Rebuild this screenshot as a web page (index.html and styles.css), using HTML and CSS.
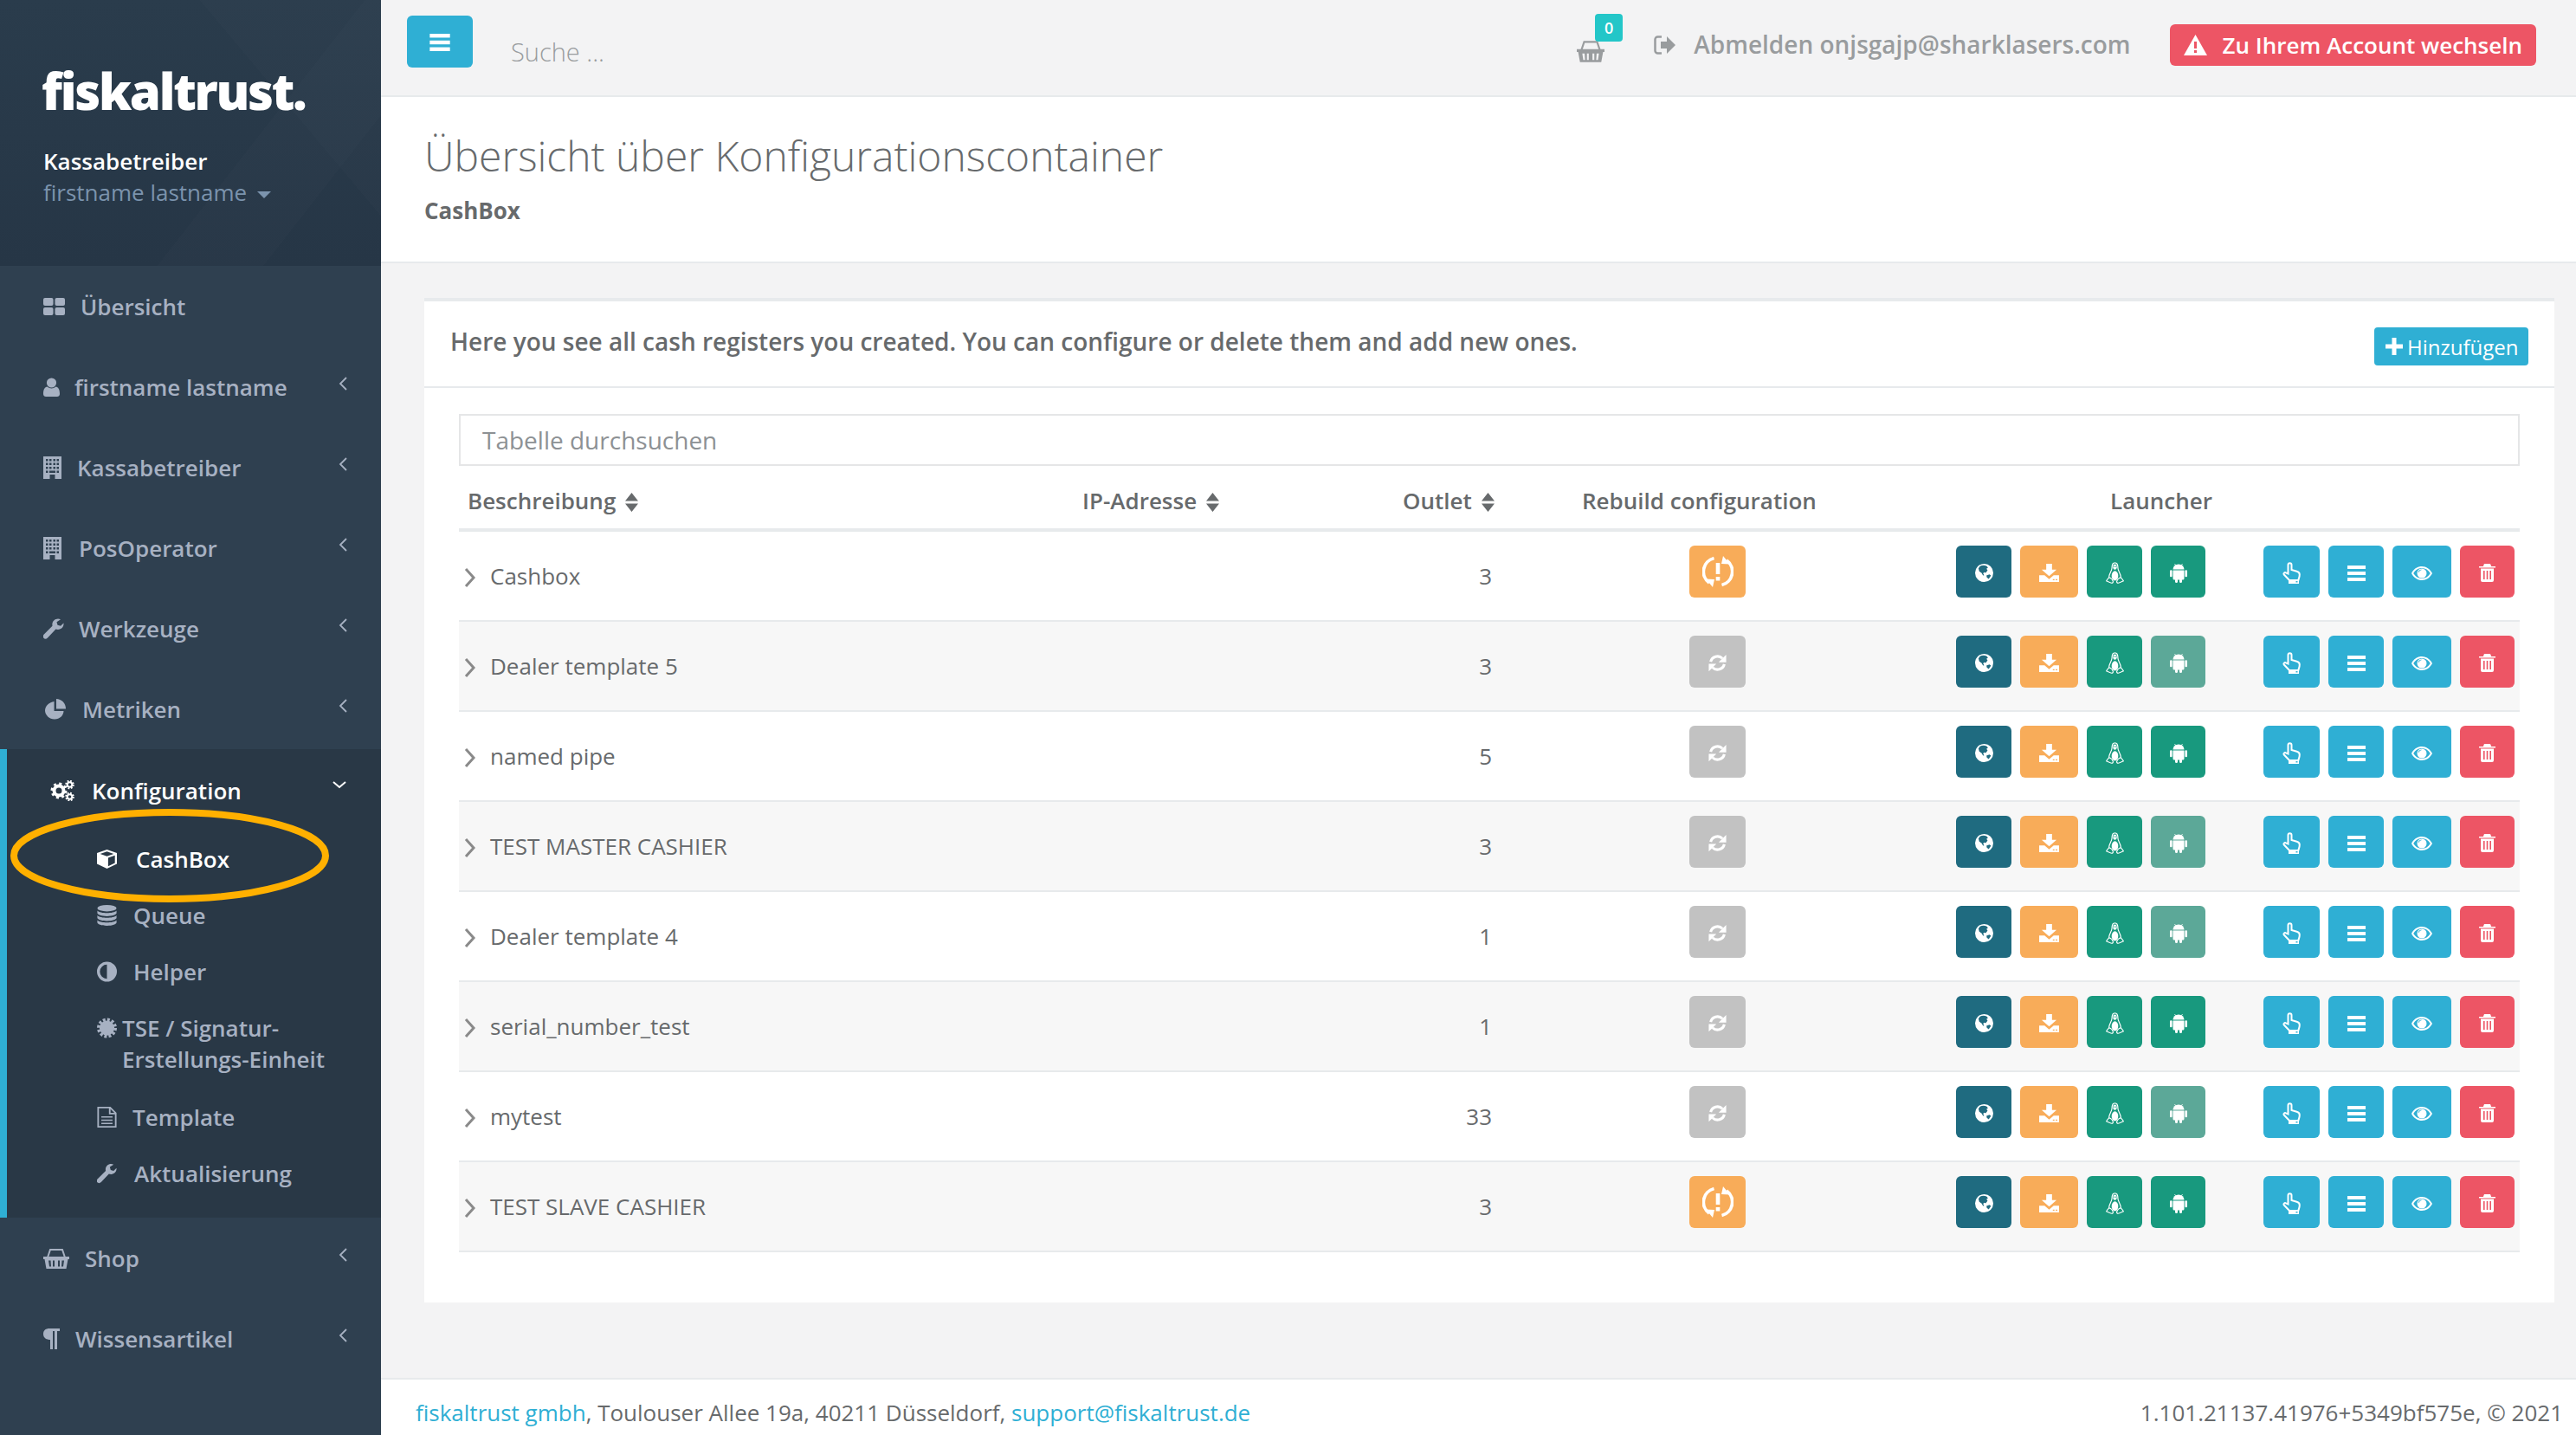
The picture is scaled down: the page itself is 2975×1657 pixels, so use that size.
FILE: index.html
```html
<!DOCTYPE html>
<html lang="de">

<head>
    <meta charset="UTF-8">
    <meta name="viewport" content="width=device-width, initial-scale=1.0">
    <title>Übersicht über Konfigurationscontainer</title>
    <link rel="stylesheet" href="styles.css">
</head>

<body>
    <svg class="sprite" xmlns="http://www.w3.org/2000/svg">
        <symbol id="i-dash" viewBox="0 0 25 20"><rect width="11.5" height="9" rx="2"/><rect x="13.5" width="11.5" height="9" rx="2"/><rect y="11" width="11.5" height="9" rx="2"/><rect x="13.5" y="11" width="11.5" height="9" rx="2"/></symbol>
        <symbol id="i-user" viewBox="0 0 19 22"><circle cx="9.5" cy="6" r="5.6"/><path d="M0 19c0-6 2-8 4.500-8.500 3 2.500 7 2.500 10 0C17 11 19 13 19 19c0 2-1.500 3-3 3H3c-1.500 0-3-1-3-3z"/></symbol>
        <symbol id="i-building" viewBox="0 0 21 26"><path fill-rule="evenodd" d="M0 0h21v26H0z M3 3v2.500h2.500V3z M7 3v2.500h2.500V3z M11.500 3v2.500H14V3z M15.500 3v2.500H18V3z M3 7.500V10h2.500V7.500z M7 7.500V10h2.500V7.500z M11.500 7.500V10H14V7.500z M15.500 7.500V10H18V7.500z M3 12v2.500h2.500V12z M7 12v2.500h2.500V12z M11.500 12v2.500H14V12z M15.500 12v2.500H18V12z M3 16.500V19h2.500v-2.500z M15.500 16.500V19H18v-2.500z M7 16.500V19h7v-2.500z M7.500 21v5h6v-5z"/></symbol>
        <symbol id="i-wrench" viewBox="0 0 24 24"><path d="M23.500 5.500c.5 4-2.500 7.500-6.500 7.500-1 0-1.800-.2-2.600-.5L5 22.500c-1.500 1.500-3.500 1.500-4.500.3-1-1-1-2.800.3-4.200l9.700-9.800C9.600 4 13 .5 17 .5c1 0 2 .2 3 .8l-4.500 3 1 3.500 3.500 1z"/></symbol>
        <symbol id="i-pie" viewBox="0 0 24 24"><path d="M10.500 3v11h11c0 5-4.500 9.500-10.500 9.500S0 18.500 0 13.500 5 3.500 10.500 3z"/><path d="M13 0c6 0 11 5 11 11.500H13z"/></symbol>
        <symbol id="i-cogs" viewBox="0 0 28 24"><g fill="none" stroke="currentColor"><circle cx="10" cy="12" r="5.500" stroke-width="4"/><circle cx="10" cy="12" r="8" stroke-width="3" stroke-dasharray="3 3.280"/><circle cx="22.500" cy="5" r="2.800" stroke-width="2"/><circle cx="22.500" cy="5" r="4.300" stroke-width="2" stroke-dasharray="1.800 1.580"/><circle cx="22.500" cy="19" r="2.800" stroke-width="2"/><circle cx="22.500" cy="19" r="4.300" stroke-width="2" stroke-dasharray="1.800 1.580"/></g></symbol>
        <symbol id="i-cube" viewBox="0 0 25 24"><path fill-rule="evenodd" d="M12.500 0L25 4.500V18L12.500 24 0 18V4.500z M12.500 2.500L4 5.500l8.500 3 8.500-3z M14 10.500v10.500l8.500-4V7.500z"/></symbol>
        <symbol id="i-db" viewBox="0 0 24 26"><ellipse cx="12" cy="4" rx="12" ry="4"/><path d="M0 7c2 2 7 3 12 3s10-1 12-3v3c0 2-5 4-12 4S0 12 0 10z"/><path d="M0 13c2 2 7 3 12 3s10-1 12-3v3c0 2-5 4-12 4S0 18 0 16z"/><path d="M0 19c2 2 7 3 12 3s10-1 12-3v3c0 2-5 4-12 4S0 24 0 22z"/></symbol>
        <symbol id="i-adjust" viewBox="0 0 24 24"><path fill-rule="evenodd" d="M12 0a12 12 0 1 0 0 24 12 12 0 0 0 0-24z M12 3.500v17a8.500 8.500 0 0 1 0-17z"/></symbol>
        <symbol id="i-cert" viewBox="0 0 24 24"><circle cx="12" cy="12" r="9"/><circle cx="12" cy="12" r="10" fill="none" stroke="currentColor" stroke-width="4" stroke-dasharray="3.100 2.136"/></symbol>
        <symbol id="i-file" viewBox="0 0 24 26"><path fill="none" stroke="currentColor" stroke-width="2" d="M1 1h15l7 7v17H1z M15.500 1v7.500H23"/><path d="M5 12h14v1.600H5z M5 16h14v1.600H5z M5 20h14v1.600H5z"/></symbol>
        <symbol id="i-basket" viewBox="0 0 30 24"><path fill="none" stroke="currentColor" stroke-width="2" d="M5 11L8 2h14l3 9"/><path fill-rule="evenodd" d="M0 10h30v3h-1.500l-2 11h-23l-2-11H0z M6 14.500l1 7h2l-.5-7z M11 14.500v7h2v-7z M17 14.500v7h2v-7z M21.500 14.500l-.5 7h2l1-7z"/></symbol>
        <symbol id="i-para" viewBox="0 0 19 24"><path d="M7 0h12v3h-3v21h-3V3h-2v21H8V13c-4 0-8-2-8-6.500S3 0 7 0z"/></symbol>
        <symbol id="i-logout" viewBox="0 0 25 22"><path fill="none" stroke="currentColor" stroke-width="2.500" d="M9 1.500H4.500a3 3 0 0 0-3 3v13a3 3 0 0 0 3 3H9"/><path d="M8 7h7V1l10 10-10 10v-6H8z"/></symbol>
        <symbol id="i-warn" viewBox="0 0 27 24"><path fill-rule="evenodd" d="M13.500 0L27 24H0z M12 8v8h3V8z M12 18v3h3v-3z"/></symbol>
        <symbol id="i-bars" viewBox="0 0 21 18"><rect width="21" height="4"/><rect y="7" width="21" height="4"/><rect y="14" width="21" height="4"/></symbol>
        <symbol id="i-plus" viewBox="0 0 20 20"><path d="M7.500 0h5v7.500H20v5h-7.500V20h-5v-7.500H0v-5h7.500z"/></symbol>
        <symbol id="i-sort" viewBox="0 0 15 22"><path d="M7.500 0L15 9.500H0z M0 12.500h15L7.500 22z"/></symbol>
        <symbol id="i-left" viewBox="0 0 10 16"><path fill="none" stroke="currentColor" stroke-width="1.800" d="M9 1L2 8l7 7"/></symbol>
        <symbol id="i-down" viewBox="0 0 16 10"><path fill="none" stroke="currentColor" stroke-width="2" d="M1 1l7 6 7-6"/></symbol>
        <symbol id="i-right" viewBox="0 0 14 24"><path fill="none" stroke="currentColor" stroke-width="3" d="M2 2l9 10-9 10"/></symbol>
        <symbol id="i-globe" viewBox="0 0 24 24"><path fill-rule="evenodd" d="M12 0a12 12 0 1 0 0 24 12 12 0 0 0 0-24z M6.500 3C9 1.800 13 1.800 15.500 3l1.500 2-2 1.500 1.500 2-2.500 3.500-1.500-1-2 1.500 1.500 2.500-1.500.3-2-3.300-3-2-1-4z M15 15.500l4-1.500 2 1.500-3 4.500-2.500-2z"/></symbol>
        <symbol id="i-download" viewBox="0 0 24 22"><path d="M8.500 0h7v7H21l-9 8-9-8h5.500z"/><path fill-rule="evenodd" d="M0 14h6.500l5.500 4.500 5.500-4.500H24v8H0z M16.500 18.500V20h2v-1.500z M20 18.500V20h2v-1.500z"/></symbol>
        <symbol id="i-linux" viewBox="0 0 22 26"><g fill="none" stroke="currentColor" stroke-width="1.200"><path d="M11 .8C8.200.8 7.400 3.500 7.400 7c0 3.500-3.200 6.500-3.700 11.500"/><path d="M11 .8c2.800 0 3.600 2.700 3.600 6.200 0 3.500 3.200 6.500 3.700 11.500"/><path d="M4 18.500c-1.500 1.700-2.500 2.700-3.300 4.300 2 1 5 2.500 6.300 2.500 1.500 0 2-1 1.700-2.300-.5-2-2.500-3.700-4.700-4.500z"/><path d="M18 18.500c1.500 1.700 2.500 2.700 3.300 4.300-2 1-5 2.500-6.300 2.500-1.500 0-2-1-1.700-2.300.5-2 2.500-3.700 4.700-4.500z"/></g><ellipse cx="11" cy="16.500" rx="4" ry="5.800"/><path fill-rule="evenodd" d="M11 2.500c1.600 0 2.400 1.400 2.400 3.500 0 1.700-1 3-2.400 3s-2.400-1.300-2.400-3c0-2.100.8-3.500 2.400-3.500z M9.800 4.500a.6.800 0 1 0 .1 0z M12.200 4.500a.6.800 0 1 0 .1 0z"/></symbol>
        <symbol id="i-android" viewBox="0 0 20 23"><path d="M3.500 7.500A6.500 6 0 0 1 16.500 7.500z"/><path d="M5.500 1L7 3.500 M14.500 1L13 3.500" stroke="currentColor" stroke-width=".8"/><path d="M3.500 8.500h13V18a1.500 1.500 0 0 1-1.500 1.500H5A1.500 1.500 0 0 1 3.500 18z"/><rect y="8.300" width="2.600" height="8" rx="1.300"/><rect x="17.400" y="8.300" width="2.600" height="8" rx="1.300"/><rect x="6" y="18" width="3" height="5" rx="1.500"/><rect x="11" y="18" width="3" height="5" rx="1.500"/></symbol>
        <symbol id="i-hand" viewBox="0 0 21 25"><path fill="none" stroke="currentColor" stroke-width="2" d="M6.500 13.500V3.200a2 2 0 0 1 4 0V9l6 1.800c2 .6 3.300 1.800 3.300 3.700 0 2.500-.8 4-1.500 6.500H8L1.800 14.500c-1-1.200.6-3.200 2.200-2.200z"/><path fill-rule="evenodd" d="M7 21h12v4H7z M15.500 22v1.500h2V22z"/></symbol>
        <symbol id="i-eye" viewBox="0 0 24 16"><path fill-rule="evenodd" d="M12 0c5 0 9.500 3 12 8-2.500 5-7 8-12 8S2.500 13 0 8c2.500-5 7-8 12-8z M12 2C8 2 4.500 4.200 2.200 8 4.500 11.800 8 14 12 14s7.500-2.200 9.800-6C19.500 4.200 16 2 12 2z"/><path fill-rule="evenodd" d="M12 2.500a5.500 5.500 0 1 0 0 11 5.500 5.500 0 0 0 0-11z M8.500 7c.2-1.500 1.500-2.500 3-2.700v-.8C9.500 3.800 8 5.300 7.800 7z"/></symbol>
        <symbol id="i-trash" viewBox="0 0 19 21"><path d="M6 0h7l1.200 3H19v1.500H0V3h4.800z"/><path fill-rule="evenodd" d="M2 5.500h15V19a2 2 0 0 1-2 2H4a2 2 0 0 1-2-2z M5 8v10h1.600V8z M8.700 8v10h1.600V8z M12.400 8v10H14V8z"/></symbol>
        <symbol id="i-refresh" viewBox="0 0 24 24"><g fill="none" stroke="currentColor" stroke-width="3.600"><path d="M3 10.500A9.200 9.200 0 0 1 18.500 6"/><path d="M21 13.500A9.200 9.200 0 0 1 5.500 18"/></g><path d="M23.500 1v10h-10z M.5 23V13h10z"/></symbol>
        <symbol id="i-rebuild" viewBox="0 0 36 36"><g fill="none" stroke="currentColor" stroke-width="3.800"><path d="M13.500 2.500A16 16 0 0 0 8 31"/><path d="M22.500 33.500A16 16 0 0 0 28 5"/></g><path d="M4 26.500l10 .5L12 36z M32 9.500l-10-.5L24 0z"/><rect x="15.700" y="8" width="4.600" height="13"/><rect x="15.700" y="24" width="4.600" height="4.500"/></symbol>
    </svg>

    <aside class="sidebar">
        <div class="profile">
            <div class="logo">fiskaltrust.</div>
            <div class="profile-role">Kassabetreiber</div>
            <div class="profile-name">firstname lastname <span class="caret"></span></div>
        </div>
        <ul class="nav">
            <li class="nav-item"><svg class="ic ic-dash"><use href="#i-dash"/></svg><span>Übersicht</span></li>
            <li class="nav-item"><svg class="ic ic-user"><use href="#i-user"/></svg><span class="pull-1">firstname lastname</span><svg class="angle"><use href="#i-left"/></svg></li>
            <li class="nav-item"><svg class="ic ic-building"><use href="#i-building"/></svg><span>Kassabetreiber</span><svg class="angle"><use href="#i-left"/></svg></li>
            <li class="nav-item"><svg class="ic ic-building"><use href="#i-building"/></svg><span class="push-1">PosOperator</span><svg class="angle"><use href="#i-left"/></svg></li>
            <li class="nav-item"><svg class="ic ic-wrench"><use href="#i-wrench"/></svg><span class="pull-1">Werkzeuge</span><svg class="angle"><use href="#i-left"/></svg></li>
            <li class="nav-item"><svg class="ic ic-pie"><use href="#i-pie"/></svg><span class="pull-1">Metriken</span><svg class="angle"><use href="#i-left"/></svg></li>
            <li class="nav-group">
                <div class="nav-item nav-item-open"><svg class="ic ic-cogs"><use href="#i-cogs"/></svg><span>Konfiguration</span><svg class="angle-down"><use href="#i-down"/></svg></div>
                <ul class="subnav">
                    <li class="subnav-item subnav-active"><svg class="ic ic-sub"><use href="#i-cube"/></svg><span class="gap-22">CashBox</span></li>
                    <li class="subnav-item"><svg class="ic ic-sub"><use href="#i-db"/></svg><span class="gap-19">Queue</span></li>
                    <li class="subnav-item"><svg class="ic ic-sub"><use href="#i-adjust"/></svg><span class="gap-19">Helper</span></li>
                    <li class="subnav-item subnav-tall"><svg class="ic ic-sub ic-top"><use href="#i-cert"/></svg><span class="gap-6">TSE / Signatur-<br>Erstellungs-Einheit</span></li>
                    <li class="subnav-item"><svg class="ic ic-sub"><use href="#i-file"/></svg><span class="gap-18">Template</span></li>
                    <li class="subnav-item"><svg class="ic ic-sub"><use href="#i-wrench"/></svg><span class="gap-20">Aktualisierung</span></li>
                </ul>
                <svg class="marker" viewBox="0 0 368 108" preserveAspectRatio="none"><ellipse cx="184" cy="54" rx="180" ry="50"/></svg>
            </li>
            <li class="nav-item"><svg class="ic ic-basket"><use href="#i-basket"/></svg><span>Shop</span><svg class="angle"><use href="#i-left"/></svg></li>
            <li class="nav-item"><svg class="ic ic-para"><use href="#i-para"/></svg><span>Wissensartikel</span><svg class="angle"><use href="#i-left"/></svg></li>
        </ul>
    </aside>

    <div class="main">
        <header class="topbar">
            <button class="burger"><svg class="ic ic-burger"><use href="#i-bars"/></svg></button>
            <div class="search">Suche ...</div>
            <div class="topbar-right">
                <div class="cart"><svg class="ic ic-cart"><use href="#i-basket"/></svg><span class="cart-badge">0</span></div>
                <svg class="ic ic-logout"><use href="#i-logout"/></svg>
                <span class="logout-text">Abmelden onjsgajp@sharklasers.com</span>
                <button class="switch-btn"><svg class="ic ic-warn"><use href="#i-warn"/></svg>Zu Ihrem Account wechseln</button>
            </div>
        </header>

        <section class="page-heading">
            <h1>Übersicht über Konfigurationscontainer</h1>
            <strong>CashBox</strong>
        </section>

        <main class="content">
            <div class="card">
                <div class="card-title">
                    <h5>Here you see all cash registers you created. You can configure or delete them and add new ones.</h5>
                    <button class="add-btn"><svg class="ic ic-plus"><use href="#i-plus"/></svg>Hinzufügen</button>
                </div>
                <div class="card-body">
                    <div class="table-search">Tabelle durchsuchen</div>
                    <table class="box-table">
                        <colgroup>
                            <col class="col-desc"><col class="col-ip"><col class="col-outlet"><col class="col-rebuild"><col class="col-launcher"><col class="col-actions">
                        </colgroup>
                        <thead>
                            <tr>
                                <th>Beschreibung <svg class="ic ic-sort"><use href="#i-sort"/></svg></th>
                                <th>IP-Adresse <svg class="ic ic-sort"><use href="#i-sort"/></svg></th>
                                <th class="th-outlet">Outlet <svg class="ic ic-sort"><use href="#i-sort"/></svg></th>
                                <th class="th-rebuild">Rebuild configuration</th>
                                <th class="th-launcher">Launcher</th>
                                <th></th>
                            </tr>
                        </thead>
                        <tbody>
                            <tr>
                                <td class="td-name"><svg class="ic row-arrow"><use href="#i-right"/></svg>Cashbox</td><td></td><td class="td-num">3</td>
                                <td class="td-btns td-rebuild"><button class="btn btn-rebuild btn-warn"><svg class="ic ic-rebuild"><use href="#i-rebuild"/></svg></button></td>
                                <td class="td-btns td-launcher"><div class="btn-row"><button class="btn btn-globe"><svg class="ic ic-globe"><use href="#i-globe"/></svg></button><button class="btn btn-download"><svg class="ic ic-download"><use href="#i-download"/></svg></button><button class="btn btn-linux"><svg class="ic ic-linux"><use href="#i-linux"/></svg></button><button class="btn btn-android"><svg class="ic ic-android"><use href="#i-android"/></svg></button></div></td>
                                <td class="td-btns td-actions"><div class="btn-row"><button class="btn btn-touch"><svg class="ic ic-hand"><use href="#i-hand"/></svg></button><button class="btn btn-list"><svg class="ic ic-bars"><use href="#i-bars"/></svg></button><button class="btn btn-view"><svg class="ic ic-eye"><use href="#i-eye"/></svg></button><button class="btn btn-delete"><svg class="ic ic-trash"><use href="#i-trash"/></svg></button></div></td>
                            </tr>
                            <tr>
                                <td class="td-name"><svg class="ic row-arrow"><use href="#i-right"/></svg>Dealer template 5</td><td></td><td class="td-num">3</td>
                                <td class="td-btns td-rebuild"><button class="btn btn-rebuild"><svg class="ic ic-refresh"><use href="#i-refresh"/></svg></button></td>
                                <td class="td-btns td-launcher"><div class="btn-row"><button class="btn btn-globe"><svg class="ic ic-globe"><use href="#i-globe"/></svg></button><button class="btn btn-download"><svg class="ic ic-download"><use href="#i-download"/></svg></button><button class="btn btn-linux"><svg class="ic ic-linux"><use href="#i-linux"/></svg></button><button class="btn btn-android btn-faded"><svg class="ic ic-android"><use href="#i-android"/></svg></button></div></td>
                                <td class="td-btns td-actions"><div class="btn-row"><button class="btn btn-touch"><svg class="ic ic-hand"><use href="#i-hand"/></svg></button><button class="btn btn-list"><svg class="ic ic-bars"><use href="#i-bars"/></svg></button><button class="btn btn-view"><svg class="ic ic-eye"><use href="#i-eye"/></svg></button><button class="btn btn-delete"><svg class="ic ic-trash"><use href="#i-trash"/></svg></button></div></td>
                            </tr>
                            <tr>
                                <td class="td-name"><svg class="ic row-arrow"><use href="#i-right"/></svg>named pipe</td><td></td><td class="td-num">5</td>
                                <td class="td-btns td-rebuild"><button class="btn btn-rebuild"><svg class="ic ic-refresh"><use href="#i-refresh"/></svg></button></td>
                                <td class="td-btns td-launcher"><div class="btn-row"><button class="btn btn-globe"><svg class="ic ic-globe"><use href="#i-globe"/></svg></button><button class="btn btn-download"><svg class="ic ic-download"><use href="#i-download"/></svg></button><button class="btn btn-linux"><svg class="ic ic-linux"><use href="#i-linux"/></svg></button><button class="btn btn-android"><svg class="ic ic-android"><use href="#i-android"/></svg></button></div></td>
                                <td class="td-btns td-actions"><div class="btn-row"><button class="btn btn-touch"><svg class="ic ic-hand"><use href="#i-hand"/></svg></button><button class="btn btn-list"><svg class="ic ic-bars"><use href="#i-bars"/></svg></button><button class="btn btn-view"><svg class="ic ic-eye"><use href="#i-eye"/></svg></button><button class="btn btn-delete"><svg class="ic ic-trash"><use href="#i-trash"/></svg></button></div></td>
                            </tr>
                            <tr>
                                <td class="td-name"><svg class="ic row-arrow"><use href="#i-right"/></svg>TEST MASTER CASHIER</td><td></td><td class="td-num">3</td>
                                <td class="td-btns td-rebuild"><button class="btn btn-rebuild"><svg class="ic ic-refresh"><use href="#i-refresh"/></svg></button></td>
                                <td class="td-btns td-launcher"><div class="btn-row"><button class="btn btn-globe"><svg class="ic ic-globe"><use href="#i-globe"/></svg></button><button class="btn btn-download"><svg class="ic ic-download"><use href="#i-download"/></svg></button><button class="btn btn-linux"><svg class="ic ic-linux"><use href="#i-linux"/></svg></button><button class="btn btn-android btn-faded"><svg class="ic ic-android"><use href="#i-android"/></svg></button></div></td>
                                <td class="td-btns td-actions"><div class="btn-row"><button class="btn btn-touch"><svg class="ic ic-hand"><use href="#i-hand"/></svg></button><button class="btn btn-list"><svg class="ic ic-bars"><use href="#i-bars"/></svg></button><button class="btn btn-view"><svg class="ic ic-eye"><use href="#i-eye"/></svg></button><button class="btn btn-delete"><svg class="ic ic-trash"><use href="#i-trash"/></svg></button></div></td>
                            </tr>
                            <tr>
                                <td class="td-name"><svg class="ic row-arrow"><use href="#i-right"/></svg>Dealer template 4</td><td></td><td class="td-num">1</td>
                                <td class="td-btns td-rebuild"><button class="btn btn-rebuild"><svg class="ic ic-refresh"><use href="#i-refresh"/></svg></button></td>
                                <td class="td-btns td-launcher"><div class="btn-row"><button class="btn btn-globe"><svg class="ic ic-globe"><use href="#i-globe"/></svg></button><button class="btn btn-download"><svg class="ic ic-download"><use href="#i-download"/></svg></button><button class="btn btn-linux"><svg class="ic ic-linux"><use href="#i-linux"/></svg></button><button class="btn btn-android btn-faded"><svg class="ic ic-android"><use href="#i-android"/></svg></button></div></td>
                                <td class="td-btns td-actions"><div class="btn-row"><button class="btn btn-touch"><svg class="ic ic-hand"><use href="#i-hand"/></svg></button><button class="btn btn-list"><svg class="ic ic-bars"><use href="#i-bars"/></svg></button><button class="btn btn-view"><svg class="ic ic-eye"><use href="#i-eye"/></svg></button><button class="btn btn-delete"><svg class="ic ic-trash"><use href="#i-trash"/></svg></button></div></td>
                            </tr>
                            <tr>
                                <td class="td-name"><svg class="ic row-arrow"><use href="#i-right"/></svg>serial_number_test</td><td></td><td class="td-num">1</td>
                                <td class="td-btns td-rebuild"><button class="btn btn-rebuild"><svg class="ic ic-refresh"><use href="#i-refresh"/></svg></button></td>
                                <td class="td-btns td-launcher"><div class="btn-row"><button class="btn btn-globe"><svg class="ic ic-globe"><use href="#i-globe"/></svg></button><button class="btn btn-download"><svg class="ic ic-download"><use href="#i-download"/></svg></button><button class="btn btn-linux"><svg class="ic ic-linux"><use href="#i-linux"/></svg></button><button class="btn btn-android"><svg class="ic ic-android"><use href="#i-android"/></svg></button></div></td>
                                <td class="td-btns td-actions"><div class="btn-row"><button class="btn btn-touch"><svg class="ic ic-hand"><use href="#i-hand"/></svg></button><button class="btn btn-list"><svg class="ic ic-bars"><use href="#i-bars"/></svg></button><button class="btn btn-view"><svg class="ic ic-eye"><use href="#i-eye"/></svg></button><button class="btn btn-delete"><svg class="ic ic-trash"><use href="#i-trash"/></svg></button></div></td>
                            </tr>
                            <tr>
                                <td class="td-name"><svg class="ic row-arrow"><use href="#i-right"/></svg>mytest</td><td></td><td class="td-num">33</td>
                                <td class="td-btns td-rebuild"><button class="btn btn-rebuild"><svg class="ic ic-refresh"><use href="#i-refresh"/></svg></button></td>
                                <td class="td-btns td-launcher"><div class="btn-row"><button class="btn btn-globe"><svg class="ic ic-globe"><use href="#i-globe"/></svg></button><button class="btn btn-download"><svg class="ic ic-download"><use href="#i-download"/></svg></button><button class="btn btn-linux"><svg class="ic ic-linux"><use href="#i-linux"/></svg></button><button class="btn btn-android btn-faded"><svg class="ic ic-android"><use href="#i-android"/></svg></button></div></td>
                                <td class="td-btns td-actions"><div class="btn-row"><button class="btn btn-touch"><svg class="ic ic-hand"><use href="#i-hand"/></svg></button><button class="btn btn-list"><svg class="ic ic-bars"><use href="#i-bars"/></svg></button><button class="btn btn-view"><svg class="ic ic-eye"><use href="#i-eye"/></svg></button><button class="btn btn-delete"><svg class="ic ic-trash"><use href="#i-trash"/></svg></button></div></td>
                            </tr>
                            <tr>
                                <td class="td-name"><svg class="ic row-arrow"><use href="#i-right"/></svg>TEST SLAVE CASHIER</td><td></td><td class="td-num">3</td>
                                <td class="td-btns td-rebuild"><button class="btn btn-rebuild btn-warn"><svg class="ic ic-rebuild"><use href="#i-rebuild"/></svg></button></td>
                                <td class="td-btns td-launcher"><div class="btn-row"><button class="btn btn-globe"><svg class="ic ic-globe"><use href="#i-globe"/></svg></button><button class="btn btn-download"><svg class="ic ic-download"><use href="#i-download"/></svg></button><button class="btn btn-linux"><svg class="ic ic-linux"><use href="#i-linux"/></svg></button><button class="btn btn-android"><svg class="ic ic-android"><use href="#i-android"/></svg></button></div></td>
                                <td class="td-btns td-actions"><div class="btn-row"><button class="btn btn-touch"><svg class="ic ic-hand"><use href="#i-hand"/></svg></button><button class="btn btn-list"><svg class="ic ic-bars"><use href="#i-bars"/></svg></button><button class="btn btn-view"><svg class="ic ic-eye"><use href="#i-eye"/></svg></button><button class="btn btn-delete"><svg class="ic ic-trash"><use href="#i-trash"/></svg></button></div></td>
                            </tr>
                        </tbody>
                    </table>
                </div>
            </div>
        </main>

        <footer class="footer">
            <div><a href="#">fiskaltrust gmbh</a>, Toulouser Allee 19a, 40211 Düsseldorf, <a href="#">support@fiskaltrust.de</a></div>
            <div>1.101.21137.41976+5349bf575e, © 2021</div>
        </footer>
    </div>
</body>

</html>
```

FILE: styles.css
```css
* {
    box-sizing: border-box;
}

body {
    display: flex;
    margin: 0;
    height: 100vh;
    overflow: hidden;
    font-family: "Open Sans", Arial, sans-serif;
    font-size: 26px;
    color: #676a6c;
    background-color: #f3f3f4;
}

button {
    font-family: inherit;
    border: none;
    padding: 0;
}

ul {
    list-style: none;
    margin: 0;
    padding: 0;
}

a {
    color: #2fafd4;
    text-decoration: none;
}

.sprite {
    display: none;
}

.ic {
    fill: currentColor;
    flex: none;
}

/* sidebar */
.sidebar {
    flex: none;
    width: 440px;
    background-color: #2f4050;
    font-weight: 600;
    color: #a7b1c2;
}

.profile {
    height: 307px;
    padding: 63px 0 0 50px;
    background:
        linear-gradient(128deg, transparent 62%, rgba(255, 255, 255, 0.01) 62%, rgba(255, 255, 255, 0.01) 80%, transparent 80%),
        linear-gradient(50deg, transparent 70%, rgba(255, 255, 255, 0.012) 70%),
        linear-gradient(180deg, #2a3c4c 0%, #263646 100%);
}

.logo {
    font-size: 58px;
    line-height: 84px;
    font-weight: 800;
    letter-spacing: -2.300px;
    color: #fff;
    margin-left: -2px;
}

.profile-role {
    margin-top: 21px;
    line-height: 36px;
    color: #fff;
}

.profile-name {
    line-height: 36px;
    font-weight: 400;
    color: #7b93ad;
}

.caret {
    display: inline-block;
    margin-left: 5px;
    vertical-align: middle;
    border-top: 8px solid #7b93ad;
    border-left: 8px solid transparent;
    border-right: 8px solid transparent;
}

.nav-item {
    display: flex;
    align-items: center;
    height: 93px;
    padding-top: 1px;
    padding-left: 50px;
    position: relative;
    gap: 18px;
}

.push-1 { margin-left: 2px; }
.pull-1 { margin-left: -1px; }

.angle,
.angle-down {
    position: absolute;
    right: 39px;
    top: 35px;
    width: 10px;
    height: 16px;
}

.angle-down {
    right: 40px;
    top: 37px;
    width: 16px;
    height: 10px;
    color: #fff;
}

.nav-group {
    position: relative;
    height: 541px;
    background-color: #293846;
    border-left: 8px solid #2fafd4;
}

.nav-item-open {
    padding-top: 2px;
    padding-left: 50px;
    color: #fff;
    gap: 20px;
}

.subnav {
    margin-top: 2px;
    padding-left: 104px;
}

.subnav-item {
    display: flex;
    align-items: center;
    padding: 14px 0 15px;
    line-height: 36px;
}

.subnav-tall {
    padding-bottom: 17px;
}

.subnav-active {
    color: #fff;
}

.gap-22 { margin-left: 22px; }
.gap-20 { margin-left: 20px; }
.gap-19 { margin-left: 19px; }
.gap-18 { margin-left: 18px; }
.gap-6 { margin-left: 6px; }

.ic-dash { width: 25px; height: 20px; }
.ic-user { width: 19px; height: 22px; }
.ic-building { width: 21px; height: 26px; }
.ic-wrench { width: 24px; height: 24px; }
.ic-pie { width: 28px; height: 24px; }
.ic-cogs { width: 28px; height: 24px; }
.ic-basket { width: 30px; height: 24px; }
.ic-para { width: 19px; height: 24px; }
.ic-sub { width: 23px; height: 24px; }
.ic-top { align-self: flex-start; margin-top: 6px; }

.marker {
    position: absolute;
    left: 4px;
    top: 69px;
    width: 368px;
    height: 108px;
    fill: none;
    stroke: #ffb000;
    stroke-width: 8;
}

/* top bar */
.main {
    flex: 1;
    display: flex;
    flex-direction: column;
    min-width: 0;
}

.topbar {
    display: flex;
    flex: none;
    height: 112px;
    padding: 18px 46px 0 30px;
    border-bottom: 2px solid #e7eaec;
    background-color: #f3f3f4;
}

.burger {
    display: flex;
    align-items: center;
    justify-content: center;
    width: 76px;
    height: 60px;
    padding-top: 2px;
    border-radius: 6px;
    background-color: #2fafd4;
    color: #fff;
}

.ic-burger {
    width: 24px;
    height: 20px;
}

.search {
    margin: 24px 0 0 44px;
    font-size: 29px;
    line-height: 36px;
    color: #999c9e;
    font-weight: 300;
}

.topbar-right {
    display: flex;
    align-items: center;
    margin-left: auto;
    height: 68px;
    padding-top: 0;
}

.cart {
    position: relative;
    height: 28px;
    margin-top: 14px;
    color: #999c9e;
}

.ic-cart {
    display: block;
    width: 32px;
    height: 28px;
}

.cart-badge {
    position: absolute;
    left: 21px;
    top: -29px;
    width: 32px;
    height: 32px;
    border-radius: 4px;
    background-color: #23c6c8;
    color: #fff;
    font-size: 18px;
    font-weight: 600;
    line-height: 32px;
    text-align: center;
}

.ic-logout {
    width: 25px;
    height: 22px;
    margin-left: 57px;
    color: #999c9e;
}

.logout-text {
    margin-left: 21px;
    padding-bottom: 2px;
    font-size: 28px;
    font-weight: 600;
    color: #999c9e;
}

.switch-btn {
    display: flex;
    align-items: center;
    height: 48px;
    margin-left: 45px;
    margin-top: 0;
    padding: 0 16px;
    border-radius: 6px;
    background-color: #ed5565;
    color: #fff;
    font-size: 26px;
    font-weight: 600;
}

.ic-warn {
    width: 27px;
    height: 24px;
    margin-right: 18px;
}

/* heading */
.page-heading {
    flex: none;
    height: 192px;
    padding: 39px 50px 0;
    background-color: #fff;
    border-bottom: 2px solid #e7eaec;
}

.page-heading h1 {
    margin: 0 0 16px;
    font-size: 48px;
    font-weight: 300;
    line-height: 58px;
}

.page-heading strong {
    display: block;
    line-height: 36px;
}

/* card */
.content {
    flex: 1;
    padding: 40px 25px 0 50px;
    min-height: 0;
}

.card {
    height: 1160px;
    background-color: #fff;
    border-top: 4px solid #e7eaec;
}

.card-title {
    display: flex;
    justify-content: space-between;
    height: 100px;
    padding: 30px 30px 0 30px;
    border-bottom: 2px solid #e7eaec;
}

.card-title h5 {
    margin: 0;
    font-size: 28px;
    font-weight: 600;
    line-height: 32px;
}

.add-btn {
    display: flex;
    align-items: center;
    width: 178px;
    height: 44px;
    padding-left: 13px;
    border-radius: 4px;
    background-color: #2fafd4;
    color: #fff;
    font-size: 24px;
}

.ic-plus {
    width: 20px;
    height: 20px;
    margin-right: 5px;
}

.card-body {
    padding: 30px 40px 0;
}

.table-search {
    height: 60px;
    padding-left: 25px;
    border: 2px solid #e5e6e7;
    font-size: 28px;
    line-height: 56px;
    color: #8d9194;
}

.box-table {
    width: 2380px;
    margin-top: 12px;
    table-layout: fixed;
    border-collapse: separate;
    border-spacing: 0;
}

.col-desc { width: 710px; }
.col-ip { width: 370px; }
.col-outlet { width: 125px; }
.col-rebuild { width: 505px; }
.col-launcher { width: 350px; }
.col-actions { width: 320px; }

.box-table th {
    height: 64px;
    padding: 0 0 4px 10px;
    border-bottom: 4px solid #e7eaec;
    font-weight: 600;
    text-align: left;
    white-space: nowrap;
}

.box-table th.th-rebuild {
    padding-left: 92px;
}

.box-table th.th-launcher {
    padding-left: 197px;
}

.ic-sort {
    width: 15px;
    height: 22px;
    margin-left: 4px;
    vertical-align: -3px;
}

.box-table td {
    height: 104px;
    padding: 0;
    border-bottom: 2px solid #e7eaec;
}

.box-table tbody tr:nth-child(even) td {
    background-color: #f7f7f7;
}

.td-name {
    padding-left: 6px !important;
    white-space: nowrap;
}

.row-arrow {
    width: 14px;
    height: 24px;
    margin-right: 16px;
    vertical-align: -4px;
    color: #8a8a8a;
}

.td-num {
    padding-right: 12px !important;
    text-align: right;
}

.td-btns {
    vertical-align: top;
    padding-top: 16px !important;
}

.td-rebuild { padding-left: 216px !important; }
.td-launcher { padding-left: 19px !important; }
.td-actions { padding-left: 24px !important; }

.btn-row {
    display: flex;
    gap: 10px;
}

.btn {
    display: flex;
    align-items: center;
    justify-content: center;
    height: 60px;
    padding-top: 3px;
    border-radius: 6px;
    color: #fff;
}

.btn-rebuild { width: 65px; background-color: #c2c2c2; }
.btn-warn { background-color: #f8ac59; padding-top: 0; }
.btn-globe { width: 64px; background-color: #1f6b80; }
.btn-download { width: 67px; background-color: #f8ac59; }
.btn-linux { width: 64px; background-color: #18997e; }
.btn-android { width: 63px; background-color: #18997e; }
.btn-faded { background-color: #5ca898; }
.btn-touch { width: 65px; background-color: #2fafd4; }
.btn-list { width: 64px; background-color: #2fafd4; }
.btn-view { width: 68px; background-color: #2fafd4; }
.btn-delete { width: 63px; background-color: #ed5565; }

.ic-refresh { width: 21px; height: 21px; }
.ic-rebuild { width: 36px; height: 36px; }
.ic-globe { width: 21px; height: 21px; }
.ic-download { width: 23px; height: 21px; }
.ic-linux { width: 21px; height: 25px; }
.ic-android { width: 20px; height: 23px; }
.ic-hand { width: 21px; height: 25px; }
.ic-bars { width: 21px; height: 18px; }
.ic-eye { width: 24px; height: 16px; }
.ic-trash { width: 19px; height: 21px; }

/* footer */
.footer {
    display: flex;
    flex: none;
    justify-content: space-between;
    align-items: center;
    height: 66px;
    padding: 12px 15px 0 40px;
    border-top: 2px solid #e7eaec;
    background-color: #fff;
}
```
